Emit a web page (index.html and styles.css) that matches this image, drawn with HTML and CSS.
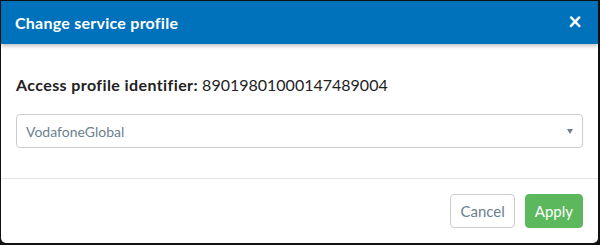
FILE: index.html
```html
<!DOCTYPE html>
<html lang="en">
<head>
    <meta charset="UTF-8">
    <title>Change service profile</title>
    <link rel="stylesheet" href="styles.css">
</head>
<body>
    <div class="modal">
        <div class="modal-header">
            <h4>Change service profile</h4>
            <span class="close">&times;</span>
        </div>
        <div class="modal-body">
            <p class="info"><b>Access profile identifier:</b> 89019801000147489004</p>
            <div class="select">
                <span>VodafoneGlobal</span>
                <span class="caret"></span>
            </div>
        </div>
        <div class="modal-footer">
            <button class="btn btn-default">Cancel</button>
            <button class="btn btn-success">Apply</button>
        </div>
    </div>
</body>
</html>
```

FILE: styles.css
```css
html, body {
    margin: 0;
    height: 100%;
}
body {
    background-color: #111;
    font-family: Lato, 'Open Sans', sans-serif;
    padding: 1px 2px 2px 1px;
    box-sizing: border-box;
}
.modal {
    background-color: white;
    height: 100%;
    border-radius: 0 0 5px 5px;
    display: flex;
    flex-direction: column;
}
.modal-header {
    background-color: #0072bb;
    height: 43px;
    display: flex;
    align-items: center;
    justify-content: space-between;
    padding: 0 14px;
    box-shadow: 0 2px 4px rgba(0,0,0,0.25);
    color: white;
}
.modal-header h4 {
    margin: 0;
    font-size: 16px;
    font-weight: bold;
    letter-spacing: 0.25px;
}
.close {
    font-size: 24px;
    font-weight: bold;
    line-height: 1;
    margin-right: 2px;
    margin-top: -3px;
}
.modal-body {
    padding: 31px 15px 30px 15px;
    border-bottom: 1px solid #e5e5e5;
}
.info {
    margin: 0 0 20px 0;
    font-size: 16px;
    color: #222;
}
.info b {
    letter-spacing: 0.4px;
}
.select {
    height: 32px;
    border: 1px solid #ccc;
    border-radius: 4px;
    display: flex;
    align-items: center;
    justify-content: space-between;
    padding: 0 9px;
    font-size: 14px;
    color: #6d7f8f;
}
.caret {
    width: 0;
    height: 0;
    border-left: 3px solid transparent;
    border-right: 3px solid transparent;
    border-top: 5px solid #6d7f8f;
}
.modal-footer {
    display: flex;
    justify-content: flex-end;
    gap: 10px;
    padding: 15px 15px;
}
.btn {
    height: 34px;
    padding: 0 9px;
    font-family: Lato, sans-serif;
    font-size: 15px;
    border-radius: 4px;
    cursor: pointer;
}
.btn-default {
    background-color: white;
    border: 1px solid #ccc;
    color: #6d7f8f;
}
.btn-success {
    background-color: #5cb85c;
    border: 1px solid #5cb85c;
    color: white;
}
```
